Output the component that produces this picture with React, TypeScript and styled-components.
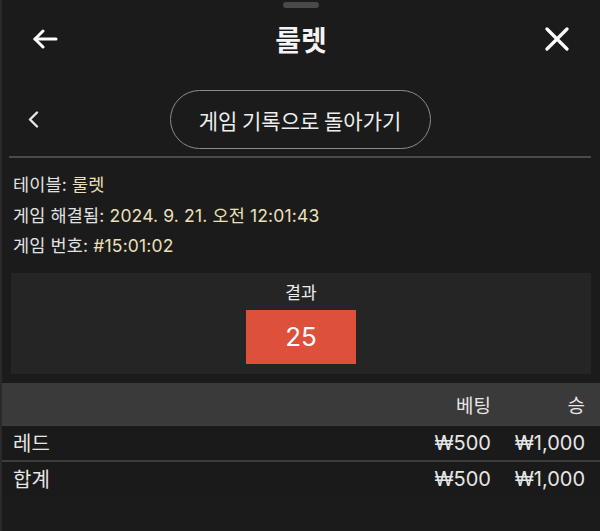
import React, { FC } from "react";
import styled, { createGlobalStyle } from "styled-components";

const GlobalStyle = createGlobalStyle`
    html, body {
        margin: 0;
        padding: 0;
        background: #1b1b1b;
    }
    * {
        box-sizing: border-box;
    }
`;

const Sheet = styled.div`
    width: 600px;
    height: 531px;
    background: #1b1b1b;
    color: #ededed;
    font-family: "Inter", "Noto Sans CJK KR", sans-serif;
    overflow: hidden;
    border-left: 2px solid #2a2a2a;
`;

const Handle = styled.div`
    width: 36px;
    height: 6px;
    border-radius: 3px;
    background: #4a4a4a;
    margin: 2px auto 0;
`;

const Header = styled.header`
    height: 62px;
    display: grid;
    grid-template-columns: 80px 1fr 80px;
    align-items: center;
`;

const IconButton = styled.button<{ $side: "left" | "right" }>`
    background: none;
    border: 0;
    padding: 0;
    display: flex;
    justify-content: ${(p) => (p.$side === "left" ? "flex-start" : "flex-end")};
    padding-left: ${(p) => (p.$side === "left" ? "30px" : "0")};
    padding-right: ${(p) => (p.$side === "right" ? "31px" : "0")};
    color: #fff;
`;

const Title = styled.h1`
    margin: 0;
    text-align: center;
    font-size: 28px;
    font-weight: 700;
    color: #f4f4f4;
    font-family: "Noto Sans CJK KR", sans-serif;
`;

const NavRow = styled.div`
    display: grid;
    grid-template-columns: 1fr auto 1fr;
    align-items: center;
    margin: 0 9px 0 7px;
    padding: 20px 0 7px;
    border-bottom: 2px solid #4a4a4a;
`;

const ChevronCell = styled.div`
    padding-left: 19px;
    display: flex;
    align-items: center;
`;

const BackPill = styled.button`
    height: 59px;
    width: 261px;
    border: 1px solid #8c8c8c;
    border-radius: 30px;
    background: transparent;
    color: #ededed;
    font-family: "Noto Sans CJK KR", sans-serif;
    font-size: 21px;
    letter-spacing: 0;
`;

const Info = styled.div`
    padding: 16px 11px 0;
    display: flex;
    flex-direction: column;
    gap: 9px;
`;

const InfoLine = styled.div`
    font-size: 17.5px;
    line-height: 21.5px;
    color: #e2e2e2;
    font-family: "Inter", "Noto Sans CJK KR", sans-serif;
    letter-spacing: 0.15px;
`;

const Value = styled.span`
    color: #ebe0b9;
`;

const ResultBox = styled.section`
    margin: 16px 9px 0;
    height: 101px;
    background: #252525;
    display: flex;
    flex-direction: column;
    align-items: center;
    padding-top: 7px;
`;

const ResultLabel = styled.div`
    font-size: 17px;
    line-height: 24px;
    color: #ededed;
    font-family: "Noto Sans CJK KR", sans-serif;
`;

const ResultNumber = styled.div<{ $color: string }>`
    margin-top: 6px;
    width: 110px;
    height: 54px;
    background: ${(p) => p.$color};
    color: #fff;
    font-size: 26px;
    display: flex;
    align-items: center;
    justify-content: center;
`;

const Table = styled.div`
    margin-top: 9px;
`;

const Row = styled.div<{ $head?: boolean }>`
    display: grid;
    grid-template-columns: 1fr 90px 94px;
    align-items: center;
    height: ${(p) => (p.$head ? "41px" : "36px")};
    background: ${(p) => (p.$head ? "#3a3a3a" : "#1a1a1a")};
    padding: 0 15px 0 11px;
    font-size: 20px;
    color: #e6e6e6;
    & + & {
        border-top: ${(p) => (p.$head ? "0" : "2px solid #3c3c3c")};
    }
`;

const Cell = styled.div<{ $right?: boolean }>`
    text-align: ${(p) => (p.$right ? "right" : "left")};
    font-family: "Inter", "Noto Sans CJK KR", sans-serif;
    white-space: nowrap;
`;

const HeadRow = styled(Row)`
    font-size: 19px;
    padding-top: 2px;
`;

const ArrowLeft: FC = () => (
    <svg width="26" height="20" viewBox="0 0 26 20" fill="none" stroke="currentColor" strokeWidth="3" strokeLinecap="round" strokeLinejoin="round">
        <path d="M24 10H3" />
        <path d="M11 2L3 10l8 8" />
    </svg>
);

const Close: FC = () => (
    <svg width="24" height="24" viewBox="0 0 24 24" fill="none" stroke="currentColor" strokeWidth="3.2" strokeLinecap="round">
        <path d="M2 2l20 20M22 2L2 22" />
    </svg>
);

const Chevron: FC = () => (
    <svg width="11" height="17" viewBox="0 0 11 17" fill="none" stroke="#e6e6e6" strokeWidth="2.4" strokeLinecap="round" strokeLinejoin="round">
        <path d="M9 1.5L2 8.5l7 7" />
    </svg>
);

const bets = [{ name: "레드", bet: "₩500", win: "₩1,000" }];

const App: FC = () => {
    return <>
        <GlobalStyle />
        <Sheet>
            <Handle />
            <Header>
                <IconButton $side="left"><ArrowLeft /></IconButton>
                <Title>룰렛</Title>
                <IconButton $side="right"><Close /></IconButton>
            </Header>
            <NavRow>
                <ChevronCell><Chevron /></ChevronCell>
                <BackPill>게임 기록으로 돌아가기</BackPill>
                <div />
            </NavRow>
            <Info>
                <InfoLine>테이블: <Value>룰렛</Value></InfoLine>
                <InfoLine>게임 해결됨: <Value>2024. 9. 21. 오전 12:01:43</Value></InfoLine>
                <InfoLine>게임 번호: <Value>#15:01:02</Value></InfoLine>
            </Info>
            <ResultBox>
                <ResultLabel>결과</ResultLabel>
                <ResultNumber $color="#dc503c">25</ResultNumber>
            </ResultBox>
            <Table>
                <HeadRow $head>
                    <Cell />
                    <Cell $right>베팅</Cell>
                    <Cell $right>승</Cell>
                </HeadRow>
                {bets.map((b, i) => (
                    <Row key={i}>
                        <Cell>{b.name}</Cell>
                        <Cell $right>{b.bet}</Cell>
                        <Cell $right>{b.win}</Cell>
                    </Row>
                ))}
                <Row>
                    <Cell>합계</Cell>
                    <Cell $right>₩500</Cell>
                    <Cell $right>₩1,000</Cell>
                </Row>
            </Table>
        </Sheet>
    </>;
};

export default App;
